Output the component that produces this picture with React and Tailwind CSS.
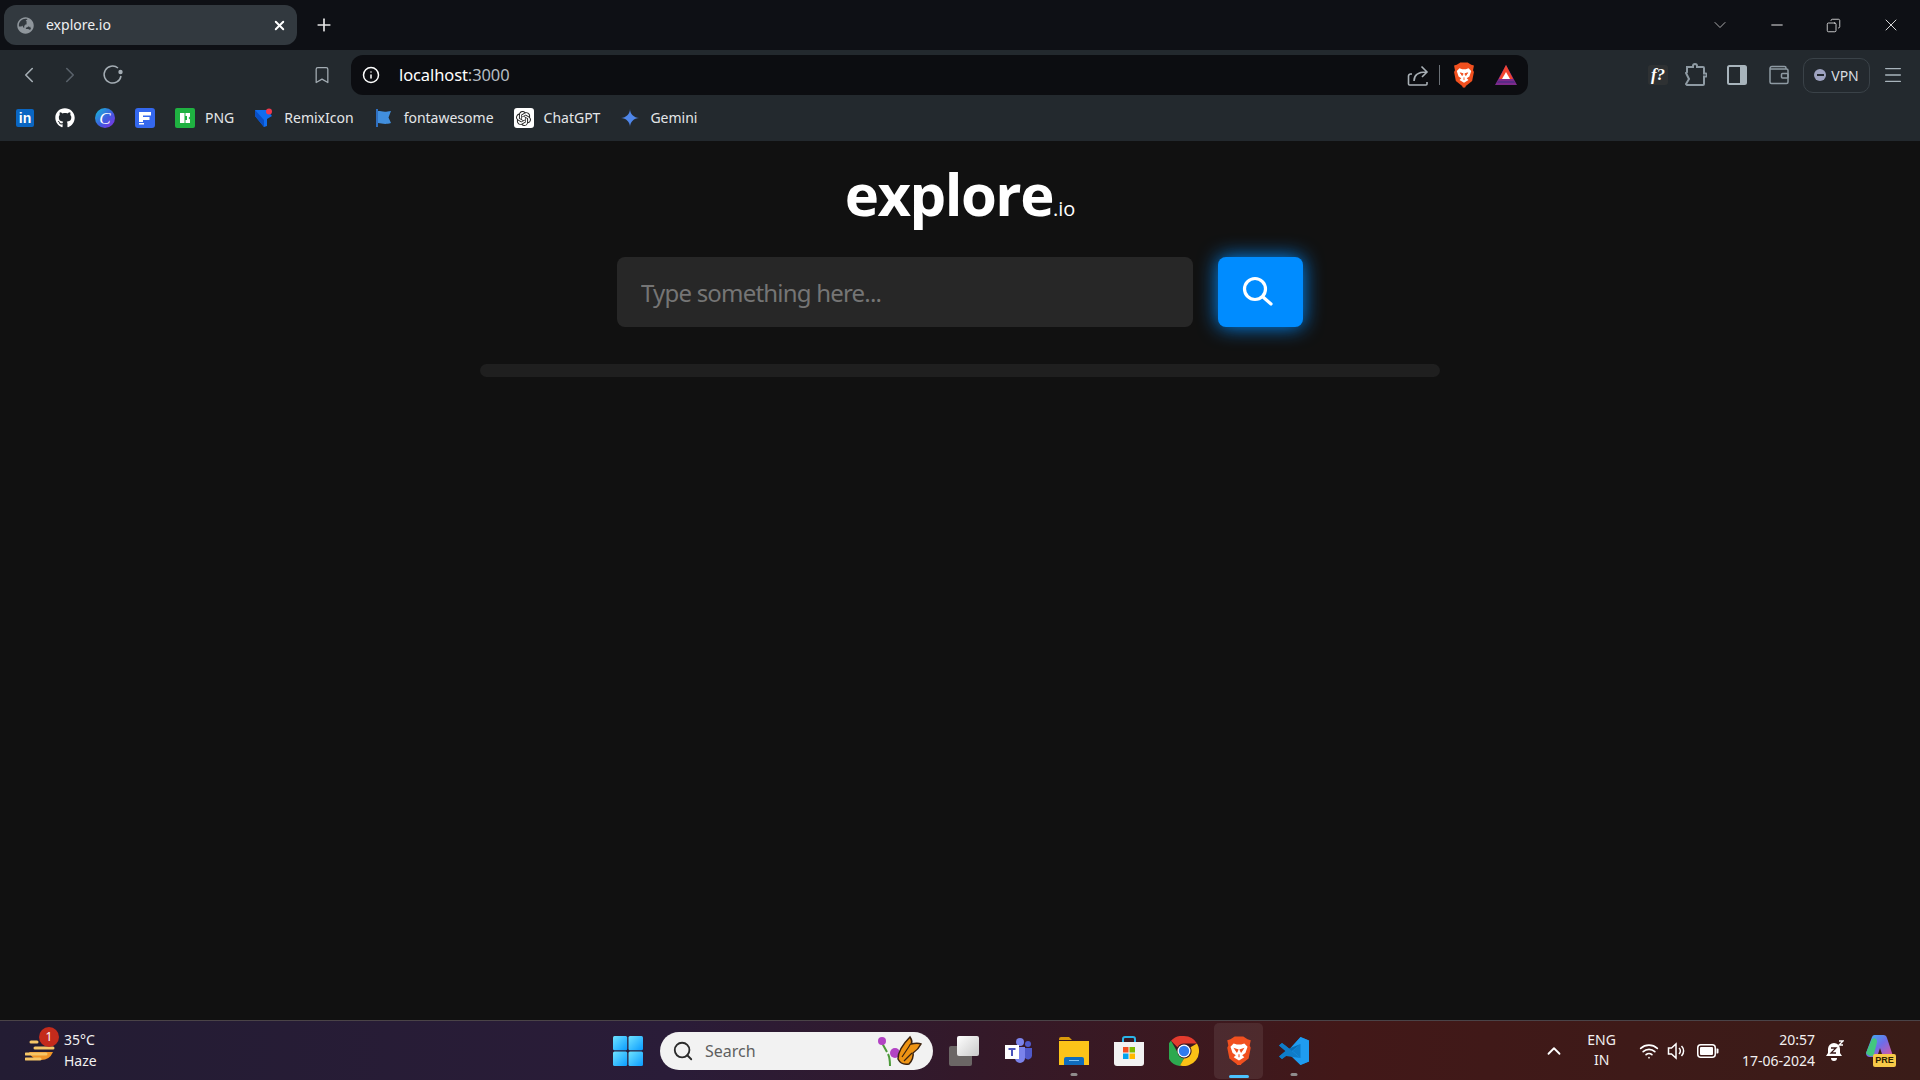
import { useId } from 'react';
import { ChevronLeft, ChevronRight, Bookmark, Info, Plus, X, Minus, ChevronDown, ChevronUp, Menu, Search, Wifi, Copy } from 'lucide-react';
import { FaGithub, FaGlobeAsia } from 'react-icons/fa';
import { SiOpenai, SiGooglegemini } from 'react-icons/si';

const LinkedinIcon = () => (
  <div className="w-[18px] h-[18px] bg-[#0a66c2] rounded-[2px] flex items-center justify-center text-white font-bold text-[14px] leading-none font-['Liberation_Sans',sans-serif]">in</div>
);

const CanvaIcon = () => (
  <div className="w-5 h-5 rounded-full bg-[linear-gradient(135deg,#12c2d6,#3f5be0_55%,#8a2be2)] flex items-center justify-center text-white italic text-[17px] leading-none font-['Liberation_Serif',serif]">C</div>
);

const FramerBox = () => (
  <svg width="20" height="20" viewBox="0 0 20 20">
    <rect width="20" height="20" rx="3" fill="#3468ee" />
    <path d="M4 4h12v3.500H8V9h6.500v3H8v2H4z" fill="#fff" />
    <path d="M4 15h5v1.500H4z" fill="#fff" />
  </svg>
);

const PngIcon = () => (
  <svg width="20" height="20" viewBox="0 0 20 20">
    <rect width="20" height="20" rx="2" fill="#1fb141" />
    <path d="M5 5h4.500v10H5zM10.500 5H15v3.500L13.500 10l1.500 1.500V15h-4.500v-3H12V8h-1.500z" fill="#fff" />
  </svg>
);

const RemixIcon = () => (
  <svg width="20" height="20" viewBox="0 0 20 20">
    <path d="M1 2h12l5 6-5 3v7l-3 1L1 8z" fill="#0f6df0" />
    <path d="M1 2l9 10v7L1 8z" fill="#0a4fc4" />
    <circle cx="15" cy="3.500" r="3" fill="#f0384d" />
  </svg>
);

const FontAwesomeIcon = () => (
  <svg width="20" height="20" viewBox="0 0 20 20">
    <path d="M2 1h2v18H2z" fill="#2f6fc0" />
    <path d="M4 3c4 0 5 1.500 13 0l-2.500 6.500L17 15c-7 2-9 0-13 0z" fill="#418fde" />
  </svg>
);

const BraveShield = ({ size = 26 }) => (
  <svg width={size} height={size * 1.15} viewBox="0 0 24 28">
    <path d="M4 3l4-2.500h8L20 3l3 1-1 5 1 2-2 10-7 5.500a2 2 0 0 1-4 0L3 21 1 11l1-2-1-5z" fill="#f1501f" />
    <path d="M7 7l3 1h4l3-1 3 3-2 6-3 2 2 2-5 3-5-3 2-2-3-2-2-6z" fill="#fff" />
    <path d="M8 12l3 1-1 2zM16 12l-3 1 1 2zM12 17v3" stroke="#f1501f" strokeWidth="1" fill="#f1501f" />
  </svg>
);

const BatIcon = () => (
  <svg width="24" height="22" viewBox="0 0 24 22">
    <path d="M12 1L1 21h22z" fill="#7d2a8c" />
    <path d="M12 1L5 15h14z" fill="#f2442e" />
    <path d="M12 8l-4 7h8z" fill="#fff" />
    <path d="M4 17h16l1 2H3z" fill="#5b2a86" />
  </svg>
);

const ReloadIcon = () => (
  <svg width="22" height="22" viewBox="0 0 22 22" className="text-[#a4adb4]">
    <path d="M19 12a8.500 8.500 0 1 1-3-8" fill="none" stroke="currentColor" strokeWidth="1.500" />
    <circle cx="18.500" cy="8" r="2.200" fill="currentColor" />
  </svg>
);

const ShareIcon = () => (
  <svg width="22" height="22" viewBox="0 0 22 22" className="text-[#a9b0b6]">
    <path d="M1.500 20V12a2 2 0 0 1 2-2H5M1.500 20a1 1 0 0 0 1 1H19a1 1 0 0 0 1-1v-2" fill="none" stroke="currentColor" strokeWidth="1.600" />
    <path d="M7 17c0-6 4-9 12-9M14.500 2.500L20 8l-5 5" fill="none" stroke="currentColor" strokeWidth="1.600" />
  </svg>
);

const PuzzleIcon = () => (
  <svg width="22" height="24" viewBox="0 0 22 24" className="text-[#8e9aa3]">
    <path d="M2 4h6V3a2 2 0 0 1 4 0v1h6a1 1 0 0 1 1 1v5.500h1.500a1.500 1.500 0 0 1 0 3H19V21a1 1 0 0 1-1 1H2l-1-1 3-5-3-6 1-1z" fill="none" stroke="currentColor" strokeWidth="2" />
  </svg>
);

const SidePanelIcon = () => (
  <svg width="20" height="20" viewBox="0 0 20 20" className="text-[#a8b4bc]">
    <rect x="1" y="1" width="18" height="18" rx="1.500" fill="none" stroke="currentColor" strokeWidth="2" />
    <rect x="13" y="1" width="6" height="18" fill="currentColor" />
  </svg>
);

const WalletIcon = () => (
  <svg width="20" height="20" viewBox="0 0 20 20" className="text-[#8e9aa3]">
    <path d="M17 4V3a1.500 1.500 0 0 0-1.500-1.500H3A2 2 0 0 0 1 3.500V17a1.500 1.500 0 0 0 1.500 1.500h15A1.500 1.500 0 0 0 19 17V5.500A1.500 1.500 0 0 0 17.500 4H1.500" fill="none" stroke="currentColor" strokeWidth="1.500" />
    <rect x="12.500" y="8.500" width="6.500" height="4.500" rx="1" fill="none" stroke="currentColor" strokeWidth="1.500" />
  </svg>
);

const WindowsLogo = () => {
  const id = useId();
  return (
    <svg width="30" height="30" viewBox="0 0 30 30">
      <defs>
        <linearGradient id={id} x1="0" y1="0" x2="1" y2="1">
          <stop offset="0" stopColor="#6fe3ff" />
          <stop offset="1" stopColor="#0a9cff" />
        </linearGradient>
      </defs>
      <rect width="14.200" height="14.200" rx="1.500" fill={`url(#${id})`} />
      <rect x="15.500" width="14.500" height="14.200" rx="1.500" fill={`url(#${id})`} />
      <rect y="15.500" width="14.200" height="14.500" rx="1.500" fill={`url(#${id})`} />
      <rect x="15.500" y="15.500" width="14.500" height="14.500" rx="1.500" fill={`url(#${id})`} />
    </svg>
  );
};

const Butterfly = () => (
  <svg width="48" height="34" viewBox="0 0 48 34">
    <path d="M15 32c0-6 0-8-2-12M12 18L7 9" stroke="#4d9a3a" strokeWidth="2" fill="none" />
    <circle cx="7" cy="7" r="4" fill="#b243c4" />
    <circle cx="20" cy="19" r="5" fill="#b243c4" />
    <path d="M23 25c0-8 6-16 12-22 2 3 2 6 1 7 4-1 8-1 10 0-2 4-5 7-8 9 1 3-1 8-4 11-5 1-9-1-11-5z" fill="#ee9414" stroke="#3a2210" strokeWidth="1.500" />
    <path d="M27 23l8-12M29 27l8-8" stroke="#3a2210" strokeWidth="1.200" />
  </svg>
);

const TaskView = () => (
  <div className="relative w-[30px] h-[30px]">
    <div className="absolute left-0 bottom-0 w-[23px] h-[20px] rounded-[2px] bg-[#6b6665]" />
    <div className="absolute right-0 top-0 w-[22px] h-[20px] rounded-[2px] bg-[linear-gradient(135deg,#ffffff,#c9c9c9)]" />
  </div>
);

const TeamsIcon = () => (
  <svg width="28" height="28" viewBox="0 0 28 28">
    <circle cx="15" cy="5" r="4" fill="#7b83eb" />
    <circle cx="23" cy="7" r="3" fill="#5059c9" />
    <path d="M10 10h10v11a5 5 0 0 1-10 0z" fill="#7b83eb" />
    <path d="M20 11h7v8a4 4 0 0 1-7 2z" fill="#5059c9" />
    <rect x="0" y="8" width="14" height="14" fill="#fff" />
    <path d="M3.500 11h7v2H8v6H6v-6H3.500z" fill="#4b53bc" />
  </svg>
);

const FolderIcon = () => (
  <svg width="30" height="28" viewBox="0 0 30 28">
    <path d="M0 2a2 2 0 0 1 2-2h8l3 3h-13z" fill="#d99a0b" />
    <path d="M0 4h30v24H0z" fill="#fcc419" />
    <path d="M5 22a2 2 0 0 1 2-2h16a2 2 0 0 1 2 2v6H5z" fill="#0f6cbd" />
    <path d="M10 23.500h10" stroke="#7fc4f4" strokeWidth="1" />
  </svg>
);

const StoreIcon = () => (
  <svg width="30" height="30" viewBox="0 0 30 30">
    <path d="M9 8V3a2 2 0 0 1 2-2h8a2 2 0 0 1 2 2v5" stroke="#2ab4e8" strokeWidth="2" fill="none" />
    <path d="M0 6h30v21a3 3 0 0 1-3 3H3a3 3 0 0 1-3-3z" fill="#f2f2f2" />
    <rect x="9" y="11" width="5.500" height="5.500" fill="#f25022" />
    <rect x="15.500" y="11" width="5.500" height="5.500" fill="#7fba00" />
    <rect x="9" y="17.500" width="5.500" height="5.500" fill="#00a4ef" />
    <rect x="15.500" y="17.500" width="5.500" height="5.500" fill="#ffb900" />
  </svg>
);

const ChromeIcon = () => (
  <svg width="30" height="30" viewBox="0 0 30 30">
    <path d="M15 0a15 15 0 0 1 13 7.500H15a7.500 7.500 0 0 0-6.500 3.750L2 4.800A15 15 0 0 1 15 0z" fill="#e33b2e" />
    <path d="M2 4.800l6.500 11.450A7.500 7.500 0 0 0 15 22.500L11 30A15 15 0 0 1 2 4.800z" fill="#2da94f" />
    <path d="M28 7.500A15 15 0 0 1 11 29.500L15 22.500a7.500 7.500 0 0 0 6.500-11.250z" fill="#fbc116" />
    <circle cx="15" cy="15" r="6.500" fill="#fff" />
    <circle cx="15" cy="15" r="5.200" fill="#2f7bee" />
  </svg>
);

const VscodeIcon = () => (
  <svg width="30" height="30" viewBox="0 0 30 30">
    <path d="M21.500 1L30 4.500v21L21.500 29 8 16z" fill="#0f7cc9" />
    <path d="M21.500 1L30 4.500v21L21.500 29V8l-8 7 8 7V29L8 16z" fill="#1f9cf0" />
    <path d="M21.500 8L7 20l-4 3-3-2.500L6.500 15 0 9.500 3 7l4 3 3 2.500z" fill="#0a6db5" />
    <path d="M21.500 22L7 10 3 7 0 9.500 6.500 15 0 20.500 3 23l4-3z" fill="#0f7cc9" />
  </svg>
);

const CopilotIcon = () => {
  const id = useId();
  return (
    <div className="relative w-[32px] h-[32px]">
      <svg width="30" height="28" viewBox="0 0 30 28">
        <defs>
          <linearGradient id={id} x1="0" y1="0" x2="1" y2="1">
            <stop offset="0" stopColor="#39b6f2" />
            <stop offset="0.5" stopColor="#6f6ce8" />
            <stop offset="1" stopColor="#e0559a" />
          </linearGradient>
        </defs>
        <path d="M8 2a3 3 0 0 1 3-2h8a4 4 0 0 1 4 3l5 15a3 3 0 0 1-3 4h-6l-3-9-3 9H6a4 4 0 0 1-4-4z" fill={`url(#${id})`} />
        <path d="M2 18L8 4c3-2 5 0 5 3l-3 12c-1 3-5 3-8-1z" fill="#42c77f" />
      </svg>
      <div className="absolute right-0 bottom-0 w-[23px] h-[13px] rounded-[2px] bg-[#f7c948] text-[#2a2000] text-[9px] leading-[13px] font-bold text-center font-['Liberation_Sans',sans-serif]">PRE</div>
    </div>
  );
};

const SpeakerIcon = () => (
  <svg width="20" height="20" viewBox="0 0 20 20" className="text-white">
    <path d="M1.500 7h3L9 3v14l-4.500-4h-3z" fill="none" stroke="currentColor" strokeWidth="1.500" />
    <path d="M12 7a4 4 0 0 1 0 6M14.500 5a7 7 0 0 1 0 10" fill="none" stroke="currentColor" strokeWidth="1.500" />
  </svg>
);

const BatteryIcon = () => (
  <svg width="22" height="14" viewBox="0 0 22 14">
    <rect x="0.750" y="0.750" width="17.500" height="12.500" rx="3" fill="none" stroke="#fff" strokeWidth="1.500" />
    <rect x="3" y="3" width="13" height="8" rx="1" fill="#fff" />
    <path d="M19.500 4.500h1a1 1 0 0 1 1 1v3a1 1 0 0 1-1 1h-1z" fill="#fff" />
  </svg>
);

const SnoozeBell = () => (
  <svg width="18" height="22" viewBox="0 0 18 22">
    <path d="M8 3a6 6 0 0 1 6 6v4l2 3H0l2-3V9a6 6 0 0 1 6-6z" fill="#fff" />
    <path d="M5 18h6a3 3 0 0 1-6 0z" fill="#fff" />
    <path d="M5 8h5l-5 5h5" fill="none" stroke="#3a1a1a" strokeWidth="1.300" />
    <path d="M13 1h4l-4 4h4" fill="none" stroke="#fff" strokeWidth="1.300" />
  </svg>
);

const BookmarkItem = ({ icon, label, gap = 'gap-[10px]' }) => (
  <div className={`flex items-center ${gap}`}>
    <div className="flex items-center justify-center w-5 h-5">{icon}</div>
    {label && <span className="text-[14px] leading-none text-[#e4e6e8]">{label}</span>}
  </div>
);

const TaskSlot = ({ children, running, active }) => (
  <div className={`relative w-[49px] h-[56px] mx-[3px] flex items-center justify-center rounded-[5px] ${active ? 'bg-[#ffffff14]' : ''}`}>
    {children}
    {running && <div className="absolute bottom-[3px] left-1/2 -translate-x-1/2 w-[7px] h-[3px] rounded-full bg-[#8f8c8c]" />}
    {active && <div className="absolute bottom-[1px] left-1/2 -translate-x-1/2 w-5 h-[3px] rounded-full bg-[#4cc2ff]" />}
  </div>
);

export default function App() {
  return (
    <div className="w-[1920px] h-[1080px] overflow-hidden flex flex-col bg-[#111111] text-white font-['Noto_Sans',sans-serif]">
      {/* tab strip */}
      <div className="h-[50px] shrink-0 bg-[#0e1015] flex items-center pl-1 pr-[19px]">
        <div className="w-[293px] h-10 rounded-xl bg-[#32393f] flex items-center pl-[13px] pr-[10px]">
          <FaGlobeAsia size={17} className="text-[#8f969c]" />
          <span className="ml-[12px] text-[14px] leading-none -mt-[1px] text-[#eef0f1]">explore.io</span>
          <X size={15} strokeWidth={3} className="ml-auto text-white" />
        </div>
        <Plus size={20} strokeWidth={2} className="ml-[17px] text-[#e6e6e6]" />
        <ChevronDown size={20} strokeWidth={1} className="ml-auto text-[#c8c8c8]" />
        <Minus size={18} strokeWidth={1.200} className="ml-[38px] text-white" />
        <Copy size={15} strokeWidth={1.200} className="ml-[40px] text-white -scale-x-100" />
        <X size={20} strokeWidth={1} className="ml-[40px] text-white" />
      </div>

      {/* toolbar */}
      <div className="h-[50px] shrink-0 bg-[#23292e] flex items-center">
        <ChevronLeft size={26} strokeWidth={1.500} className="ml-4 text-[#a4adb4]" />
        <ChevronRight size={26} strokeWidth={1.500} className="ml-[15px] text-[#59616a]" />
        <div className="ml-[19px]"><ReloadIcon /></div>
        <Bookmark size={20} strokeWidth={1.500} className="ml-[188px] text-[#a4adb4]" />
        <div className="ml-[19px] w-[1177px] h-10 rounded-xl bg-[#0c0d11] flex items-center pl-[11px] pr-[10px]">
          <Info size={18} strokeWidth={2} className="text-white" />
          <span className="ml-[19px] text-[16.500px] text-white tracking-[-0.1px]">localhost<span className="text-[#b6bcc2]">:3000</span></span>
          <div className="ml-auto"><ShareIcon /></div>
          <div className="ml-[10px] w-px h-5 bg-[#6b7076]" />
          <div className="ml-[13px] flex items-center"><BraveShield size={22} /></div>
          <div className="ml-[19px] flex items-center"><BatIcon /></div>
        </div>
        <div className="ml-[120px] w-5 h-5 rounded-[3px] bg-[#2e3133] flex items-center justify-center text-[17px] font-bold italic text-white font-['Liberation_Serif',serif]">f?</div>
        <div className="ml-[17px]"><PuzzleIcon /></div>
        <div className="ml-[20px]"><SidePanelIcon /></div>
        <div className="ml-[22px]"><WalletIcon /></div>
        <div className="ml-[14px] w-[67px] h-[35px] rounded-[10px] border border-[#3a4248] flex items-center justify-center gap-[5px] text-[14px] text-[#d9dde0]">
          <div className="w-3 h-3 rounded-full bg-[#9ea3c0] flex items-center justify-center"><div className="w-[7px] h-[2px] bg-[#23292e]" /></div>
          VPN
        </div>
        <Menu size={22} strokeWidth={1.500} className="ml-[12px] text-[#a8b4bc]" />
      </div>

      {/* bookmarks */}
      <div className="h-[41px] shrink-0 bg-[#23292e] flex items-center pl-[15px] pb-[5px] gap-5">
        <BookmarkItem icon={<LinkedinIcon />} />
        <BookmarkItem icon={<FaGithub size={20} className="text-white" />} />
        <BookmarkItem icon={<CanvaIcon />} />
        <BookmarkItem icon={<FramerBox />} />
        <BookmarkItem icon={<PngIcon />} label="PNG" />
        <BookmarkItem icon={<RemixIcon />} label="RemixIcon" />
        <BookmarkItem icon={<FontAwesomeIcon />} label="fontawesome" />
        <BookmarkItem icon={<div className="w-5 h-5 rounded-[3px] bg-white flex items-center justify-center"><SiOpenai size={15} className="text-[#222]" /></div>} label="ChatGPT" />
        <BookmarkItem icon={<SiGooglegemini size={18} className="text-[#4f86e8]" />} label="Gemini" />
      </div>

      {/* page */}
      <main className="flex-1 flex flex-col items-center">
        <h1 className="mt-[21px] h-[64px] leading-[64px] text-[58px] font-bold font-['Open_Sans',sans-serif] tracking-[-1.500px]">
          explore<span className="text-[20px] font-normal tracking-normal">.io</span>
        </h1>
        <div className="mt-[31px] flex gap-[25px]">
          <input
            type="text"
            placeholder="Type something here..."
            className="w-[576px] h-[70px] rounded-lg bg-[#272727] px-6 text-[24px] tracking-[-0.800px] text-white placeholder:text-[#757575] outline-none"
          />
          <button className="w-[85px] h-[70px] rounded-lg bg-[#008cff] flex items-center justify-center shadow-[0_0_20px_#008cff]">
            <svg width="32" height="32" viewBox="0 0 32 32" className="mr-[5px] -mt-[2px]">
              <circle cx="13" cy="14" r="10.500" fill="none" stroke="#fff" strokeWidth="3.200" />
              <path d="M21 22l8 7" fill="none" stroke="#fff" strokeWidth="3.200" strokeLinecap="round" />
            </svg>
          </button>
        </div>
        <div className="mt-[37px] w-[960px] h-[13px] rounded-lg bg-[#1f1f1f]" />
      </main>

      {/* taskbar */}
      <div className="h-[60px] shrink-0 border-t border-[#4a4347] bg-[linear-gradient(90deg,#231c33,#2a1c38_35%,#33192a_50%,#421818_70%,#3a1c18)] flex items-center">
        <div className="relative w-[613px] flex items-center pl-[25px]">
          <svg width="30" height="34" viewBox="0 0 30 34">
            <path d="M4 18h24a13 13 0 0 1-24 0z" fill="#ef9527" />
            <path d="M6 8h6M10 14h18M1 20h20M1 25h14" stroke="#f6c667" strokeWidth="3" strokeLinecap="round" />
          </svg>
          <div className="absolute left-[39px] -top-[4px] w-5 h-5 rounded-full bg-[#c42b1c] text-white text-[12px] leading-5 text-center">1</div>
          <div className="ml-[9px] -mt-[2px] text-[14px] leading-[21px] text-[#f2f0f0]">
            <div>35°C</div>
            <div>Haze</div>
          </div>
        </div>
        <WindowsLogo />
        <div className="ml-[17px] w-[273px] h-[38px] rounded-full bg-[#f2f2f2] flex items-center pl-[12px] pr-[10px]">
          <Search size={22} strokeWidth={2} className="text-[#2b2b2b]" />
          <span className="ml-[11px] text-[16px] text-[#5f5f5f]">Search</span>
          <div className="ml-auto"><Butterfly /></div>
        </div>
        <div className="ml-[3px] flex items-center">
          <TaskSlot><TaskView /></TaskSlot>
          <TaskSlot><TeamsIcon /></TaskSlot>
          <TaskSlot running><FolderIcon /></TaskSlot>
          <TaskSlot><StoreIcon /></TaskSlot>
          <TaskSlot><ChromeIcon /></TaskSlot>
          <TaskSlot active><BraveShield size={26} /></TaskSlot>
          <TaskSlot running><VscodeIcon /></TaskSlot>
        </div>
        <div className="ml-auto flex items-center pr-[24px]">
          <ChevronUp size={22} strokeWidth={2} className="text-white" />
          <div className="ml-[22px] -mt-[1px] text-center text-[14px] leading-[20px] text-[#f2f0f0]">
            <div>ENG</div>
            <div>IN</div>
          </div>
          <Wifi size={20} strokeWidth={2} className="ml-[23px] text-white" />
          <div className="ml-[8px]"><SpeakerIcon /></div>
          <div className="ml-[10px]"><BatteryIcon /></div>
          <div className="ml-[23px] -mt-[2px] text-right text-[14px] leading-[21px] text-[#f2f0f0]">
            <div>20:57</div>
            <div>17-06-2024</div>
          </div>
          <div className="ml-[11px]"><SnoozeBell /></div>
          <div className="ml-[20px]"><CopilotIcon /></div>
        </div>
      </div>
    </div>
  );
}
